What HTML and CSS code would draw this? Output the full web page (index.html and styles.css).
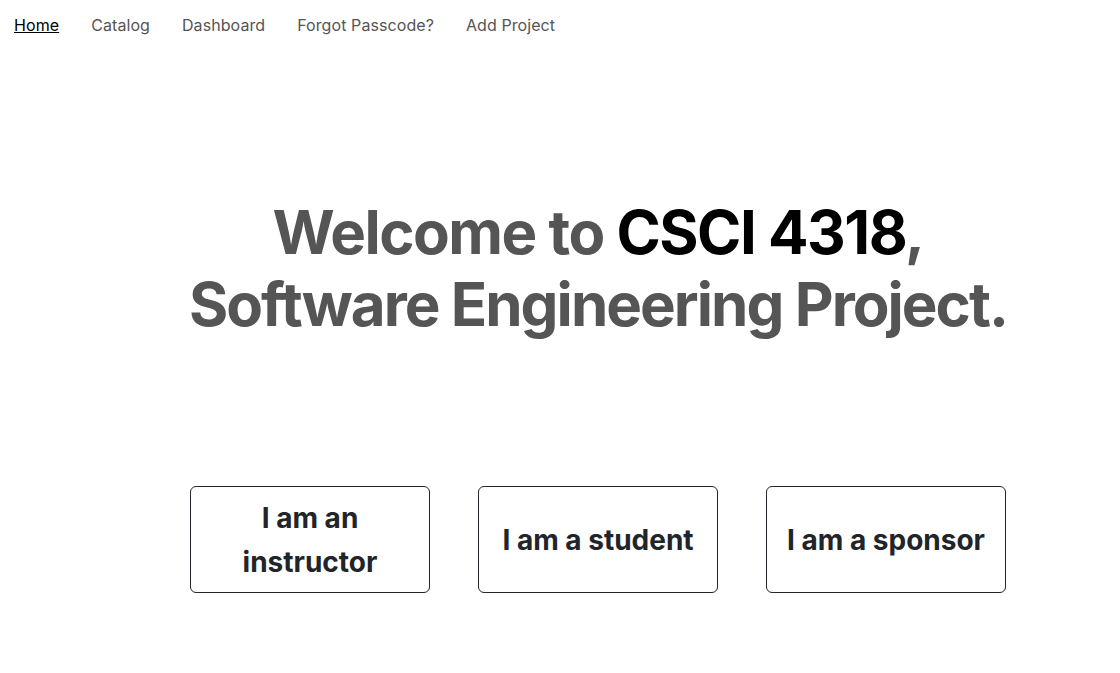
FILE: index.html
```html
<!DOCTYPE html>
<html>
<head>
<meta charset="utf-8">
<link rel="stylesheet" href="styles.css">
</head>
<body>
<nav class="nav">
  <a class="nav-link active" href="#">Home</a>
  <a class="nav-link" href="#">Catalog</a>
  <a class="nav-link" href="#">Dashboard</a>
  <a class="nav-link" href="#">Forgot Passcode?</a>
  <a class="nav-link" href="#">Add Project</a>
</nav>
<main class="main">
  <h1 class="title">Welcome to <span class="strong">CSCI 4318</span>,<br><span class="line2">Software Engineering Project.</span></h1>
  <div class="roles">
    <button class="role">I am an instructor</button>
    <button class="role">I am a student</button>
    <button class="role">I am a sponsor</button>
  </div>
</main>
</body>
</html>
```

FILE: styles.css
```css
* { box-sizing: border-box; }
html, body { margin: 0; padding: 0; background: #fff; }
body { font-family: Inter, "Noto Sans", sans-serif; color: #212529; }
.nav { display: flex; gap: 32px; padding: 15px 14px 0; height: 50px; font-size: 16px; line-height: 20px; letter-spacing: 0.08px; }
.nav-link { color: #555; text-decoration: none; }
.nav-link.active { color: #000; text-decoration: underline; }
.main { width: 816px; margin-left: 190px; padding-top: 146px; }
.title { margin: 0 -20px; text-align: center; white-space: nowrap; font-size: 60px; line-height: 72px; font-weight: 700; color: #555; letter-spacing: -1.5px; }
.line2 { letter-spacing: -1.95px; }
.strong { color: #000; }
.roles { display: flex; gap: 48px; margin-top: 146px; }
.role { width: 240px; height: 107px; background: #fff; border: 1px solid #212529; border-radius: 6px; font-family: inherit; font-size: 28px; font-weight: 700; line-height: 44px; color: #212529; padding: 0 20px; }
```
